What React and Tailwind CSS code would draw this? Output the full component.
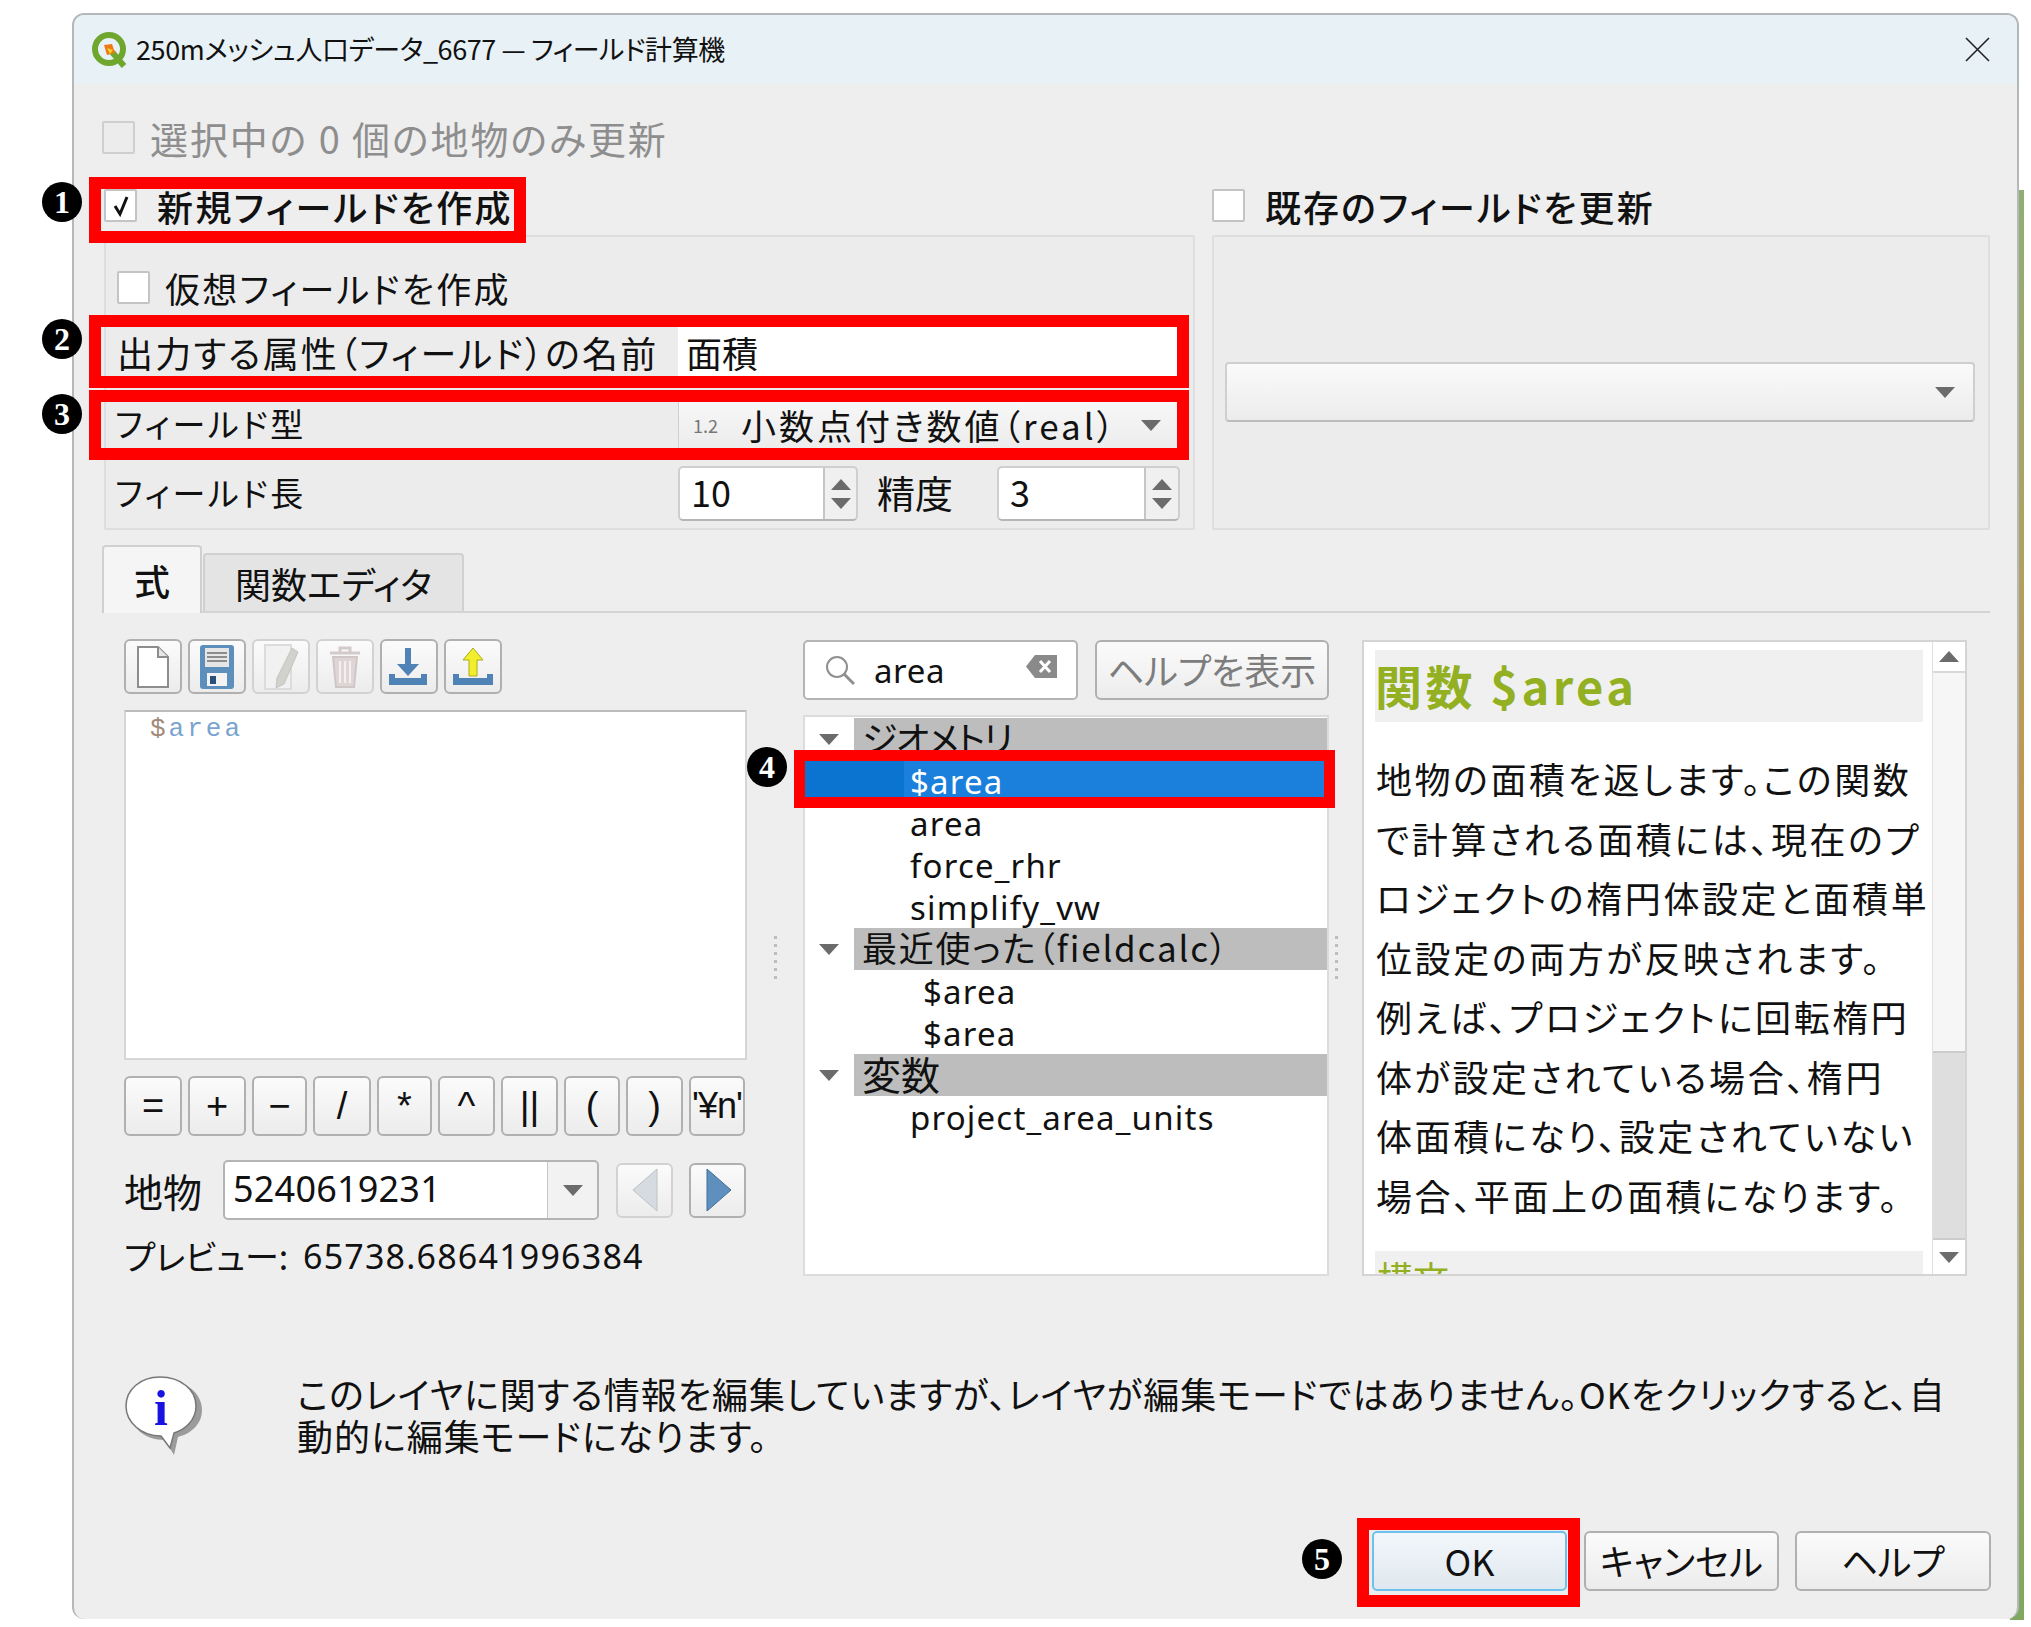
import React from "react";

const Tri = ({ dir = "down", className = "" }) => {
  const pts = { down: "0,0 20,0 10,11", up: "0,11 20,11 10,0" }[dir];
  return (
    <svg width="20" height="11" viewBox="0 0 20 11" className={className}>
      <polygon points={pts} fill="#6b6b6b" />
    </svg>
  );
};

const Check = ({ checked = false, disabled = false, className = "" }) => (
  <div className={`w-[33px] h-[33px] shrink-0 rounded-[2px] border-2 flex items-center justify-center ${disabled ? "bg-[#ececec] border-[#cfcfcf]" : "bg-white border-[#c4c4c4]"} ${className}`}>
    {checked && (
      <svg width="22" height="24" viewBox="0 0 22 24">
        <path d="M5 12 L10 20 L17 3" fill="none" stroke="#111" strokeWidth="3" />
      </svg>
    )}
  </div>
);

const Btn = ({ w, h = "h-[60px]", children, className = "", faded = false }) => (
  <div className={`${w} ${h} shrink-0 rounded-[6px] border-2 flex items-center justify-center bg-gradient-to-b from-[#fbfbfb] to-[#ececec] ${faded ? "border-[#d2d2d2]" : "border-[#b0b0b0]"} ${className}`}>
    {children}
  </div>
);

const Spin = ({ value, w, inner }) => (
  <div className={`${w} h-[55px] shrink-0 flex rounded-[5px] border-2 border-[#cfcfcf] border-b-[#b5b5b5] bg-[#f0f0f0]`}>
    <div className={`${inner} bg-white border-r-2 border-[#c6c6c6] pl-[11px] text-[36px] leading-[47px] rounded-l-[4px]`}>{value}</div>
    <div className="flex-1 flex flex-col items-center justify-center gap-[8px]">
      <Tri dir="up" />
      <Tri dir="down" />
    </div>
  </div>
);

const RedBox = ({ className }) => <div className={`absolute border-[#ff0000] ${className}`} />;

const Num = ({ n, className }) => (
  <div className={`absolute w-[40px] h-[40px] rounded-full bg-black text-white flex items-center justify-center text-[32px] font-bold leading-none [font-family:'Liberation_Serif',serif] ${className}`}>{n}</div>
);

const Dots = () => (
  <div className="flex flex-col gap-[5px]">
    {[0, 1, 2, 3, 4, 5].map((i) => (
      <div key={i} className="w-[3px] h-[3px] bg-[#bdbdbd]" />
    ))}
  </div>
);

const TreeGroup = ({ label, text = "text-[36px]" }) => (
  <div className="flex h-[42px] shrink-0">
    <div className="w-[49px] flex items-center justify-center pr-[2px]"><Tri /></div>
    <div className={`flex-1 bg-[#bdbdbd] pl-[8px] ${text} leading-[38px] whitespace-nowrap overflow-hidden`}>{label}</div>
  </div>
);

const TreeItem = ({ label, pad = "pl-[105px]" }) => (
  <div className={`h-[42px] shrink-0 ${pad} text-[33px] leading-[43px] tracking-[1.2px] [font-family:'Noto_Sans',sans-serif]`}>{label}</div>
);

const Doc = () => (
  <svg width="34" height="44" viewBox="0 0 34 44">
    <path d="M2 2 H22 L32 12 V42 H2 Z" fill="#fff" stroke="#8d8d8d" strokeWidth="2" />
    <path d="M22 2 V12 H32" fill="#e6e6e6" stroke="#8d8d8d" strokeWidth="2" />
  </svg>
);

const Floppy = () => (
  <svg width="36" height="46" viewBox="0 0 36 46">
    <rect x="1" y="1" width="34" height="44" rx="3" fill="#5d8fbd" />
    <rect x="6" y="4" width="24" height="19" fill="#e6e6e6" />
    <path d="M8 9 H28 M8 13 H28 M8 17 H28" stroke="#8c8c8c" strokeWidth="2" />
    <rect x="8" y="29" width="20" height="13" fill="#f3f3f3" />
    <rect x="11" y="32" width="6" height="8" fill="#28527a" />
  </svg>
);

const Pencil = () => (
  <svg width="38" height="50" viewBox="0 0 38 50">
    <rect x="3" y="3" width="26" height="44" fill="#f1f1f1" stroke="#dcdcdc" strokeWidth="2" />
    <path d="M30 6 L36 10 L22 42 L14 46 L15 36 Z" fill="#d2d2cc" stroke="#c4c4c0" />
  </svg>
);

const Trash = () => (
  <svg width="32" height="44" viewBox="0 0 32 44">
    <path d="M1 8 H31 M11 7 V3 H21 V7" fill="none" stroke="#d3cbcb" strokeWidth="3" />
    <path d="M4 12 H28 L25 42 H7 Z" fill="#ded6d6" stroke="#cfc6c6" strokeWidth="2" />
    <path d="M11 16 V38 M16 16 V38 M21 16 V38" stroke="#f4f0f0" strokeWidth="2" />
  </svg>
);

const TrayDown = () => (
  <svg width="40" height="38" viewBox="0 0 40 38">
    <path d="M16 0 H22 V16 H30 L19 28 L8 16 H16 Z" fill="#4f83b5" />
    <path d="M0 26 H6 V30 H32 V26 H38 V37 H0 Z" fill="#4f83b5" />
  </svg>
);

const TrayUp = () => (
  <svg width="40" height="38" viewBox="0 0 40 38">
    <path d="M20 0 L30 12 H24 V28 H16 V12 H10 Z" fill="#f2ee2a" stroke="#a8ad1d" strokeWidth="1" />
    <path d="M0 26 H6 V30 H34 V26 H40 V37 H0 Z" fill="#4f83b5" />
  </svg>
);

const Qgis = () => (
  <svg width="38" height="38" viewBox="0 0 38 38" className="shrink-0">
    <circle cx="18" cy="18" r="14" fill="none" stroke="#6ea62e" strokeWidth="6" />
    <path d="M21 21 L33 35" stroke="#6ea62e" strokeWidth="6" />
    <path d="M13 14 L21 13 L24 22 L16 24 Z" fill="#ee7913" />
    <path d="M16 17 L22 19 L19 23 Z" fill="#f6d02f" />
  </svg>
);

const Bubble = () => (
  <svg width="80" height="80" viewBox="0 0 80 80">
    <path d="M40 5 C62 5 78 18 78 35 C78 50 66 59 54 62 L50 80 L41 65 C20 65 6 52 6 35 C6 18 20 5 40 5 Z" fill="#9b9b9b" />
    <path d="M36 2 C57 2 72 15 72 31 C72 46 60 55 50 58 L46 73 L37 61 C17 61 2 47 2 31 C2 15 16 2 36 2 Z" fill="#fff" stroke="#777" strokeWidth="1.5" />
    <text x="37" y="50" textAnchor="middle" fontSize="50" fontWeight="700" fontFamily="Liberation Serif" fill="#1a12e0">i</text>
  </svg>
);

const helpLines = [
  "地物の面積を返します。この関数",
  "で計算される面積には、現在のプ",
  "ロジェクトの楕円体設定と面積単",
  "位設定の両方が反映されます。",
  "例えば、プロジェクトに回転楕円",
  "体が設定されている場合、楕円",
  "体面積になり、設定されていない",
  "場合、平面上の面積になります。",
];

const ops = [
  ["=", "w-[58px]"], ["+", "w-[58px]"], ["−", "w-[55px]"], ["/", "w-[58px]"], ["*", "w-[55px]"],
  ["^", "w-[57px]"], ["||", "w-[57px]"], ["(", "w-[56px]"], [")", "w-[57px]"], ["'¥n'", "w-[56px]"],
];

export default function App() {
  return (
    <div className="relative w-[2031px] h-[1627px] bg-white overflow-hidden pl-[72px] pt-[13px] text-[#111] [font-family:'Noto_Sans_CJK_JP','Noto_Sans',sans-serif] [font-feature-settings:'palt']">
      <div className="absolute left-[2010px] top-[190px] w-[14px] h-[1430px] bg-gradient-to-b from-[#8fae74] via-[#c9924a] to-[#7fa860]" />
      <div className="relative w-[1947px] h-[1606px] border-2 border-[#b4b8bb] border-b-0 rounded-[12px] bg-[#eeeeee] flex flex-col overflow-hidden">
        {/* title bar */}
        <div className="h-[69px] shrink-0 bg-[#e8f1f6] flex items-center pl-[17px] pr-[27px]">
          <Qgis />
          <div className="ml-[7px] pb-[3px] flex-1 text-[27px] leading-none tracking-[-0.4px] whitespace-nowrap">250mメッシュ人口データ_6677 — フィールド計算機</div>
          <svg width="25" height="25" viewBox="0 0 25 25">
            <path d="M1 1 L24 24 M24 1 L1 24" stroke="#222" strokeWidth="1.6" />
          </svg>
        </div>

        {/* selected-only row */}
        <div className="mt-[37px] ml-[28px] h-[33px] flex items-center shrink-0">
          <Check disabled />
          <span className="ml-[15px] text-[38px] leading-none text-[#8e8e8e] whitespace-nowrap tracking-[1.9px]">選択中の 0 個の地物のみ更新</span>
        </div>

        {/* two group boxes */}
        <div className="mt-[35px] ml-[30px] flex gap-[17px] shrink-0">
          <div className="w-[1091px]">
            <div className="h-[33px] flex items-center">
              <Check checked />
              <span className="ml-[20px] text-[36px] leading-none font-medium whitespace-nowrap tracking-[2.4px]">新規フィールドを作成</span>
            </div>
            <div className="mt-[13px] h-[295px] border-2 border-[#dedede] bg-[#ececec] rounded-[2px]">
              <div className="mt-[33px] ml-[11px] h-[34px] flex items-center">
                <Check />
                <span className="ml-[15px] text-[35px] leading-none whitespace-nowrap tracking-[2.3px]">仮想フィールドを作成</span>
              </div>
              <div className="mt-[23px] h-[50px] flex items-center">
                <div className="w-[572px] pl-[11px] text-[36px] leading-none whitespace-nowrap tracking-[2.2px]">出力する属性（フィールド）の名前</div>
                <div className="w-[500px] h-full bg-white pl-[8px] text-[36px] leading-[50px]">面積</div>
              </div>
              <div className="mt-[25px] h-[46px] flex items-center">
                <div className="w-[572px] pl-[9px] pb-[3px] text-[33px] leading-none whitespace-nowrap tracking-[2.7px]">フィールド型</div>
                <div className="w-[500px] h-full bg-gradient-to-b from-[#f7f7f7] to-[#ececec] flex items-center pl-[14px] pr-[17px] border-l border-[#d0d0d0]">
                  <span className="w-[48px] text-[18px] text-[#777] leading-none">1.2</span>
                  <span className="flex-1 pb-[2px] text-[35px] leading-none whitespace-nowrap tracking-[3px]">小数点付き数値（real）</span>
                  <Tri />
                </div>
              </div>
              <div className="mt-[18px] h-[55px] flex items-center">
                <div className="w-[572px] pl-[9px] pb-[3px] text-[33px] leading-none whitespace-nowrap tracking-[2.7px]">フィールド長</div>
                <Spin value="10" w="w-[180px]" inner="w-[145px]" />
                <span className="ml-[19px] pb-[3px] w-[120px] text-[38px] leading-none whitespace-nowrap">精度</span>
                <Spin value="3" w="w-[183px]" inner="w-[147px]" />
              </div>
            </div>
          </div>
          <div className="w-[778px]">
            <div className="h-[33px] flex items-center">
              <Check />
              <span className="ml-[20px] text-[36px] leading-none font-medium whitespace-nowrap tracking-[2.1px]">既存のフィールドを更新</span>
            </div>
            <div className="mt-[13px] h-[295px] border-2 border-[#dedede] bg-[#ececec] rounded-[2px] pt-[125px] pl-[11px]">
              <div className="w-[750px] h-[60px] rounded-[4px] border-2 border-[#cfcfcf] border-b-[#bdbdbd] bg-gradient-to-b from-[#fafafa] to-[#ececec] flex items-center justify-end pr-[18px]">
                <Tri />
              </div>
            </div>
          </div>
        </div>

        {/* tabs */}
        <div className="mt-[15px] ml-[28px] w-[1888px] h-[68px] shrink-0 flex items-end border-b-2 border-[#d4d4d4]">
          <div className="w-[100px] h-[68px] -mb-[2px] bg-[#f5f5f5] border-2 border-b-0 border-[#d0d0d0] rounded-t-[4px] flex items-center justify-center text-[36px] leading-none font-medium">式</div>
          <div className="ml-[1px] w-[261px] h-[58px] bg-[#e4e4e4] border-2 border-b-0 border-[#d0d0d0] rounded-t-[4px] flex items-center justify-center text-[36px] leading-none whitespace-nowrap">関数エディタ</div>
        </div>

        {/* expression area */}
        <div className="mt-[26px] ml-[50px] flex h-[637px] shrink-0">
          <div className="w-[623px] shrink-0 flex flex-col">
            <div className="flex gap-[6px] h-[55px]">
              <Btn w="w-[58px]" h="h-[55px]"><Doc /></Btn>
              <Btn w="w-[58px]" h="h-[55px]"><Floppy /></Btn>
              <Btn w="w-[58px]" h="h-[55px]" faded><Pencil /></Btn>
              <Btn w="w-[58px]" h="h-[55px]" faded><Trash /></Btn>
              <Btn w="w-[58px]" h="h-[55px]"><TrayDown /></Btn>
              <Btn w="w-[58px]" h="h-[55px]"><TrayUp /></Btn>
            </div>
            <div className="mt-[16px] h-[350px] bg-white border-2 border-[#d6d6d6] border-t-[#bcbcbc] pl-[24px] pt-[2px] text-[26px] leading-[30px] tracking-[3px] [font-family:'Liberation_Mono',monospace]">
              <span className="text-[#a08a7a]">$</span><span className="text-[#7ba3cf]">area</span>
            </div>
            <div className="mt-[16px] flex gap-[6px] h-[60px]">
              {ops.map(([t, w], i) => (
                <Btn key={i} w={w} className="text-[38px] leading-none [font-family:'Liberation_Sans',sans-serif]">
                  <span className={i === 9 ? "text-[36px] tracking-[-1px] whitespace-nowrap" : ""}>{t}</span>
                </Btn>
              ))}
            </div>
            <div className="mt-[24px] h-[60px] flex items-center">
              <span className="w-[99px] text-[39px] leading-none whitespace-nowrap">地物</span>
              <div className="w-[376px] h-[60px] rounded-[5px] border-2 border-[#b4b4b4] flex bg-[#f2f2f2]">
                <div className="w-[323px] bg-white border-r border-[#c6c6c6] pl-[8px] text-[36px] leading-[54px] rounded-l-[4px] [font-family:'Noto_Sans',sans-serif] tracking-[0.2px]">5240619231</div>
                <div className="flex-1 flex items-center justify-center"><Tri /></div>
              </div>
              <Btn w="w-[57px] ml-[17px]" h="h-[55px]" faded>
                <svg width="28" height="44" viewBox="0 0 28 44"><polygon points="26,1 26,43 2,22" fill="#d5dbe0" stroke="#bcc2c6" /></svg>
              </Btn>
              <Btn w="w-[57px] ml-[16px]" h="h-[55px]">
                <svg width="28" height="44" viewBox="0 0 28 44"><polygon points="3,1 3,43 27,22" fill="#5f8fbd" stroke="#3f6e9b" /></svg>
              </Btn>
            </div>
            <div className="mt-[21px] flex items-center h-[30px] whitespace-nowrap">
              <span className="w-[179px] text-[34px] leading-none">プレビュー:</span>
              <span className="text-[34px] leading-none tracking-[1.2px] [font-family:'Noto_Sans',sans-serif]">65738.68641996384</span>
            </div>
          </div>

          <div className="w-[56px] shrink-0 flex items-center justify-center"><Dots /></div>

          <div className="w-[526px] shrink-0 flex flex-col pt-[1px]">
            <div className="flex h-[60px] gap-[17px]">
              <div className="w-[275px] rounded-[5px] border-2 border-[#b4b4b4] bg-white flex items-center pl-[20px] pr-[18px]">
                <svg width="30" height="30" viewBox="0 0 30 30" className="shrink-0">
                  <circle cx="12" cy="12" r="10" fill="none" stroke="#8f8f8f" strokeWidth="2" />
                  <path d="M19 19 L29 29" stroke="#8f8f8f" strokeWidth="3" />
                </svg>
                <span className="ml-[19px] flex-1 text-[33px] leading-none tracking-[0.6px] [font-family:'Noto_Sans',sans-serif]">area</span>
                <svg width="33" height="25" viewBox="0 0 33 25" className="shrink-0 -mt-[8px]">
                  <path d="M10 1 H32 V24 H10 L1 12.5 Z" fill="#8a8a8a" />
                  <path d="M15 7 L25 18 M25 7 L15 18" stroke="#fff" strokeWidth="3" />
                </svg>
              </div>
              <Btn w="w-[234px]" className="text-[36px] leading-none text-[#7d7d7d] whitespace-nowrap pb-[3px]">ヘルプを表示</Btn>
            </div>
            <div className="mt-[15px] h-[561px] bg-white border-2 border-[#dcdcdc] pt-[1px] flex flex-col overflow-hidden">
              <TreeGroup label="ジオメトリ" text="text-[36px] tracking-[-1.5px]" />
              <div className="h-[42px] shrink-0 flex text-white text-[33px] leading-[43px] tracking-[1.2px] [font-family:'Noto_Sans',sans-serif]">
                <div className="w-[99px] bg-[#0a74d0]" />
                <div className="flex-1 bg-[#1a80dc] pl-[6px]">$area</div>
              </div>
              <TreeItem label="area" />
              <TreeItem label="force_rhr" />
              <TreeItem label="simplify_vw" />
              <TreeGroup label="最近使った（fieldcalc）" text="text-[35px] tracking-[1.8px]" />
              <TreeItem label="$area" pad="pl-[118px]" />
              <TreeItem label="$area" pad="pl-[118px]" />
              <TreeGroup label="変数" text="text-[39px]" />
              <TreeItem label="project_area_units" />
            </div>
          </div>

          <div className="w-[33px] shrink-0 flex items-center pl-[6px]"><Dots /></div>

          <div className="mt-[1px] w-[605px] h-[636px] shrink-0 bg-white border-2 border-[#d4d4d4] flex overflow-hidden">
            <div className="flex-1 min-w-0 overflow-hidden pl-[11px] pr-[9px] pt-[8px]">
              <div className="h-[72px] bg-[#f0f0f0] text-[47px] tracking-[3.5px] leading-[70px] font-bold text-[#93b023] whitespace-nowrap">関数 $area</div>
              <div className="mt-[27px] pl-[1px]">
                {helpLines.map((l) => (
                  <div key={l} className="h-[59.5px] text-[36px] tracking-[2.6px] leading-[59.5px] whitespace-nowrap">{l}</div>
                ))}
              </div>
              <div className="mt-[26px] h-[40px] bg-[#f0f0f0] pl-[2px] text-[36px] leading-[52px] text-[#93b023]">構文</div>
            </div>
            <div className="w-[33px] shrink-0 border-l border-[#e0e0e0] flex flex-col">
              <div className="h-[31px] border-b-2 border-[#d8d8d8] flex items-center justify-center"><Tri dir="up" /></div>
              <div className="h-[378px] bg-[#f6f6f6]" />
              <div className="h-[189px] bg-[#dedede] border-y-2 border-[#cccccc]" />
              <div className="flex-1 flex items-center justify-center"><Tri /></div>
            </div>
          </div>
        </div>

        {/* info */}
        <div className="mt-[99px] ml-[50px] flex shrink-0 h-[84px]">
          <Bubble />
          <div className="ml-[93px] -mt-[3px] text-[36px] leading-[42px] tracking-[1px] whitespace-nowrap">
            <div>このレイヤに関する情報を編集していますが、レイヤが編集モードではありません。OKをクリックすると、自</div>
            <div>動的に編集モードになります。</div>
          </div>
        </div>

        {/* buttons */}
        <div className="mt-[72px] mr-[26px] flex justify-end text-[36px] leading-none shrink-0">
          <div className="w-[195px] h-[60px] pb-[3px] rounded-[5px] border-2 border-[#6fc0ea] bg-gradient-to-b from-[#f3f7fb] to-[#dfe8ef] flex items-center justify-center">OK</div>
          <Btn w="w-[195px] ml-[17px]" className="pb-[3px]">キャンセル</Btn>
          <Btn w="w-[196px] ml-[16px]" className="pb-[3px]">ヘルプ</Btn>
        </div>
      </div>

      {/* annotations laid over the dialog */}
      <RedBox className="left-[89px] top-[177px] w-[437px] h-[66px] border-[12px]" />
      <RedBox className="left-[89px] top-[315px] w-[1100px] h-[73px] border-[12px]" />
      <RedBox className="left-[89px] top-[390px] w-[1100px] h-[70px] border-[12px]" />
      <RedBox className="left-[794px] top-[750px] w-[541px] h-[58px] border-[11px]" />
      <RedBox className="left-[1357px] top-[1518px] w-[223px] h-[89px] border-[12px]" />
      <Num n="1" className="left-[42px] top-[182px]" />
      <Num n="2" className="left-[42px] top-[319px]" />
      <Num n="3" className="left-[42px] top-[394px]" />
      <Num n="4" className="left-[747px] top-[747px]" />
      <Num n="5" className="left-[1302px] top-[1539px]" />
    </div>
  );
}
